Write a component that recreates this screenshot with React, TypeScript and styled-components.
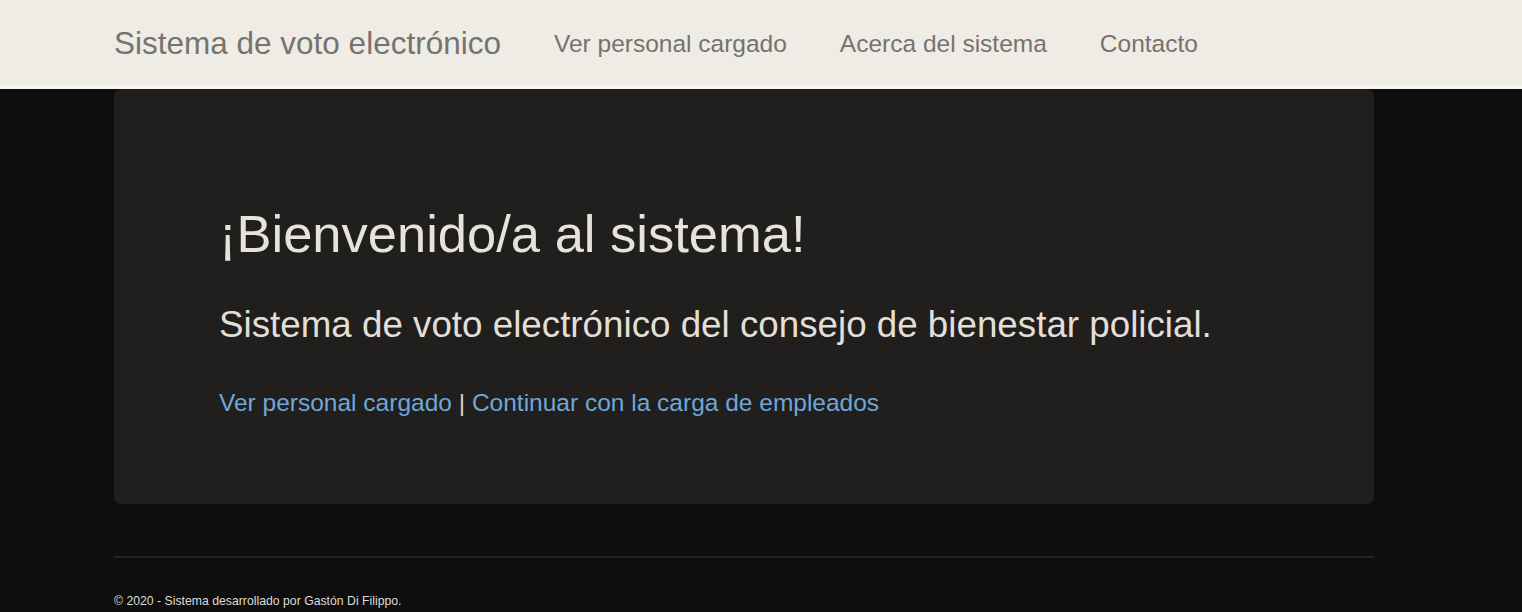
import styled, { createGlobalStyle } from 'styled-components';

const GlobalStyle = createGlobalStyle`
  html, body {
    margin: 0;
    padding: 0;
    background: #0e0e0e;
    font-family: "Liberation Sans", Helvetica, Arial, sans-serif;
  }
`;

const navLinks = ['Ver personal cargado', 'Acerca del sistema', 'Contacto'];

export default function App() {
  return (
    <>
      <GlobalStyle />
      <Navbar>
        <NavContainer>
          <Brand href="#">Sistema de voto electrónico</Brand>
          <NavList>
            {navLinks.map((label) => (
              <NavItem key={label}>
                <NavLink href="#">{label}</NavLink>
              </NavItem>
            ))}
          </NavList>
        </NavContainer>
      </Navbar>

      <Container>
        <Jumbotron>
          <Title>¡Bienvenido/a al sistema!</Title>
          <Lead>Sistema de voto electrónico del consejo de bienestar policial.</Lead>
          <Links>
            <Link href="#">Ver personal cargado</Link> |{' '}
            <Link href="#">Continuar con la carga de empleados</Link>
          </Links>
        </Jumbotron>

        <Footer>
          <Divider />
          <Copy>© 2020 - Sistema desarrollado por Gastón Di Filippo.</Copy>
        </Footer>
      </Container>
    </>
  );
}

const Navbar = styled.nav`
  height: 86px;
  background: #efece6;
  border-bottom: 3px solid #f8f5ef;
`;

const NavContainer = styled.div`
  width: 1260px;
  height: 100%;
  margin-left: 114px;
  display: flex;
  align-items: center;
`;

const Brand = styled.a`
  font-size: 31.5px;
  line-height: 35px;
  color: #75736e;
  text-decoration: none;
  padding-right: 26.5px;
`;

const NavList = styled.ul`
  display: flex;
  list-style: none;
  margin: 0;
  padding: 0;
`;

const NavItem = styled.li`
  display: block;
`;

const NavLink = styled.a`
  display: block;
  padding: 0 26.5px;
  font-size: 24.5px;
  line-height: 35px;
  color: #75736e;
  text-decoration: none;
`;

const Container = styled.main`
  width: 1260px;
  margin-left: 114px;
`;

const Jumbotron = styled.section`
  background: #201f1d;
  border-radius: 7px;
  padding: 84px 105px 84px;
`;

const Title = styled.h1`
  margin: 32px 0 36px;
  font-size: 52.5px;
  line-height: 57.75px;
  font-weight: 400;
  color: #e6e3dc;
`;

const Lead = styled.p`
  margin: 0 0 34px;
  font-size: 36.75px;
  line-height: 52.5px;
  color: #e2dfd8;
`;

const Links = styled.p`
  margin: 0;
  font-size: 24.5px;
  line-height: 35px;
  color: #d8d5cf;
`;

const Link = styled.a`
  color: #6ea7d8;
  text-decoration: none;
`;

const Footer = styled.footer`
  padding-top: 52px;
`;

const Divider = styled.hr`
  margin: 0 0 35px;
  border: 0;
  border-top: 2px solid #232323;
`;

const Copy = styled.p`
  margin: 0;
  font-size: 12.25px;
  line-height: 17.5px;
  color: #dcdcdc;
`;
